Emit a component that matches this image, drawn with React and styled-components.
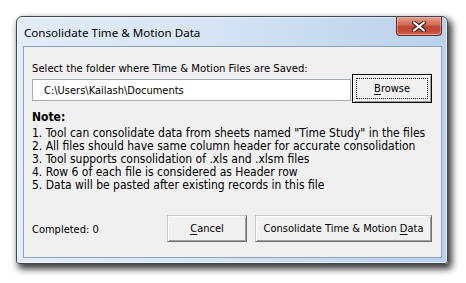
import React from "react";
import styled, { createGlobalStyle } from "styled-components";

const GlobalStyle = createGlobalStyle`
  html, body {
    margin: 0;
    padding: 0;
    background: #ffffff;
  }
`;

const Page = styled.div`
  width: 466px;
  height: 283px;
  padding: 16px 0 0 16px;
  box-sizing: border-box;
  overflow: hidden;
`;

const Window = styled.div`
  width: 432px;
  height: 248px;
  box-sizing: border-box;
  display: flex;
  flex-direction: column;
  border: 1px solid #3f4852;
  border-radius: 6px 6px 3px 3px;
  background: linear-gradient(to right, #e3ecf7 0%, #d6e4f3 45%, #b9d1eb 100%);
  box-shadow: 3px 4px 7px 1px rgba(0, 0, 0, 0.78), inset 0 0 0 1px rgba(255, 255, 255, 0.6);
`;

const TitleBar = styled.div`
  height: 29px;
  display: flex;
  align-items: center;
  padding-left: 7px;
`;

const Title = styled.div`
  flex: 1;
  font-family: "Noto Sans", "Open Sans", sans-serif;
  font-size: 11.6px;
  color: #000;
  padding-top: 1px;
`;

const CloseButton = styled.div`
  align-self: flex-start;
  width: 46px;
  height: 19px;
  margin-right: 5px;
  box-sizing: border-box;
  border: 1px solid #6b2b26;
  border-top: none;
  border-radius: 0 0 4px 4px;
  background: linear-gradient(to bottom, #e6a08c 0%, #d26f5a 40%, #bf4431 55%, #c44f39 85%, #d77b63 100%);
  box-shadow: inset 0 0 0 1px rgba(255, 200, 190, 0.45);
  display: flex;
  align-items: center;
  justify-content: center;
`;

const Client = styled.div`
  flex: 1;
  margin: 0 5px 5px 6px;
  border: 1px solid #8fa3b8;
  background: #f0f0f0;
  display: flex;
  flex-direction: column;
  padding: 15px 9px 15px 8px;
  font-family: "DejaVu Sans Condensed", "DejaVu Sans", "Liberation Sans", sans-serif;
  font-stretch: condensed;
  font-size: 11px;
  color: #000;
`;

const Label = styled.div`
  font-size: 11.2px;
  line-height: 13px;
  white-space: nowrap;
`;

const PathRow = styled.div`
  display: flex;
  align-items: flex-end;
  gap: 1px;
  margin-top: -1px;
`;

const PathInput = styled.div`
  width: 320px;
  height: 22px;
  box-sizing: border-box;
  margin-bottom: 2px;
  border: 1px solid #a5acb5;
  background: #fff;
  display: flex;
  align-items: center;
  padding-left: 11px;
  white-space: nowrap;
`;

const Button = styled.div`
  height: ${(p) => (p.$tall ? 29 : 27)}px;
  width: ${(p) => p.$width}px;
  box-sizing: border-box;
  display: flex;
  align-items: center;
  justify-content: center;
  position: relative;
  background: #f0f0f0;
  border: 1px solid;
  border-color: ${(p) => (p.$default ? "#000" : "#c8c8c8 #707070 #707070 #c8c8c8")};
  box-shadow: inset 1px 1px 0 #fff, inset -1px -1px 0 #a0a0a0;
  white-space: nowrap;

  u {
    text-decoration: underline;
    text-underline-offset: 2px;
  }
`;

const FocusRing = styled.div`
  position: absolute;
  inset: 3px;
  border: 1px dotted #000;
`;

const NoteBlock = styled.div`
  margin-top: 8px;
  font-size: 12px;
  line-height: 13px;
  white-space: nowrap;
`;

const NoteTitle = styled.div`
  font-weight: bold;
  margin-bottom: 3px;
`;

const Footer = styled.div`
  margin-top: auto;
  display: flex;
  align-items: center;
  gap: 8px;
`;

const Status = styled.div`
  flex: 1;
  padding-top: 1px;
`;

const notes = [
  '1. Tool can consolidate data from sheets named "Time Study" in the files',
  "2. All files should have same column header for accurate consolidation",
  "3. Tool supports consolidation of .xls and .xlsm files",
  "4. Row 6 of each file is considered as Header row",
  "5. Data will be pasted after existing records in this file",
];

const CloseIcon = () => (
  <svg width="14" height="11" viewBox="0 0 14 11">
    <path d="M2 1.5 L12 9.5 M12 1.5 L2 9.5" stroke="#3a2020" strokeWidth="4.2" strokeLinecap="round" />
    <path d="M2 1.5 L12 9.5 M12 1.5 L2 9.5" stroke="#ffffff" strokeWidth="2.2" strokeLinecap="round" />
  </svg>
);

export default function App() {
  return (
    <Page>
      <GlobalStyle />
      <Window>
        <TitleBar>
          <Title>Consolidate Time &amp; Motion Data</Title>
          <CloseButton>
            <CloseIcon />
          </CloseButton>
        </TitleBar>
        <Client>
          <Label>Select the folder where Time &amp; Motion Files are Saved:</Label>
          <PathRow>
            <PathInput>C:\Users\Kailash\Documents</PathInput>
            <Button $default $tall $width={80}>
              <FocusRing />
              <span>
                <u>B</u>rowse
              </span>
            </Button>
          </PathRow>
          <NoteBlock>
            <NoteTitle>Note:</NoteTitle>
            {notes.map((n) => (
              <div key={n}>{n}</div>
            ))}
          </NoteBlock>
          <Footer>
            <Status>Completed: 0</Status>
            <Button $width={80}>
              <span>
                <u>C</u>ancel
              </span>
            </Button>
            <Button $width={177}>
              <span>
                Consolidate Time &amp; Motion <u>D</u>ata
              </span>
            </Button>
          </Footer>
        </Client>
      </Window>
    </Page>
  );
}
